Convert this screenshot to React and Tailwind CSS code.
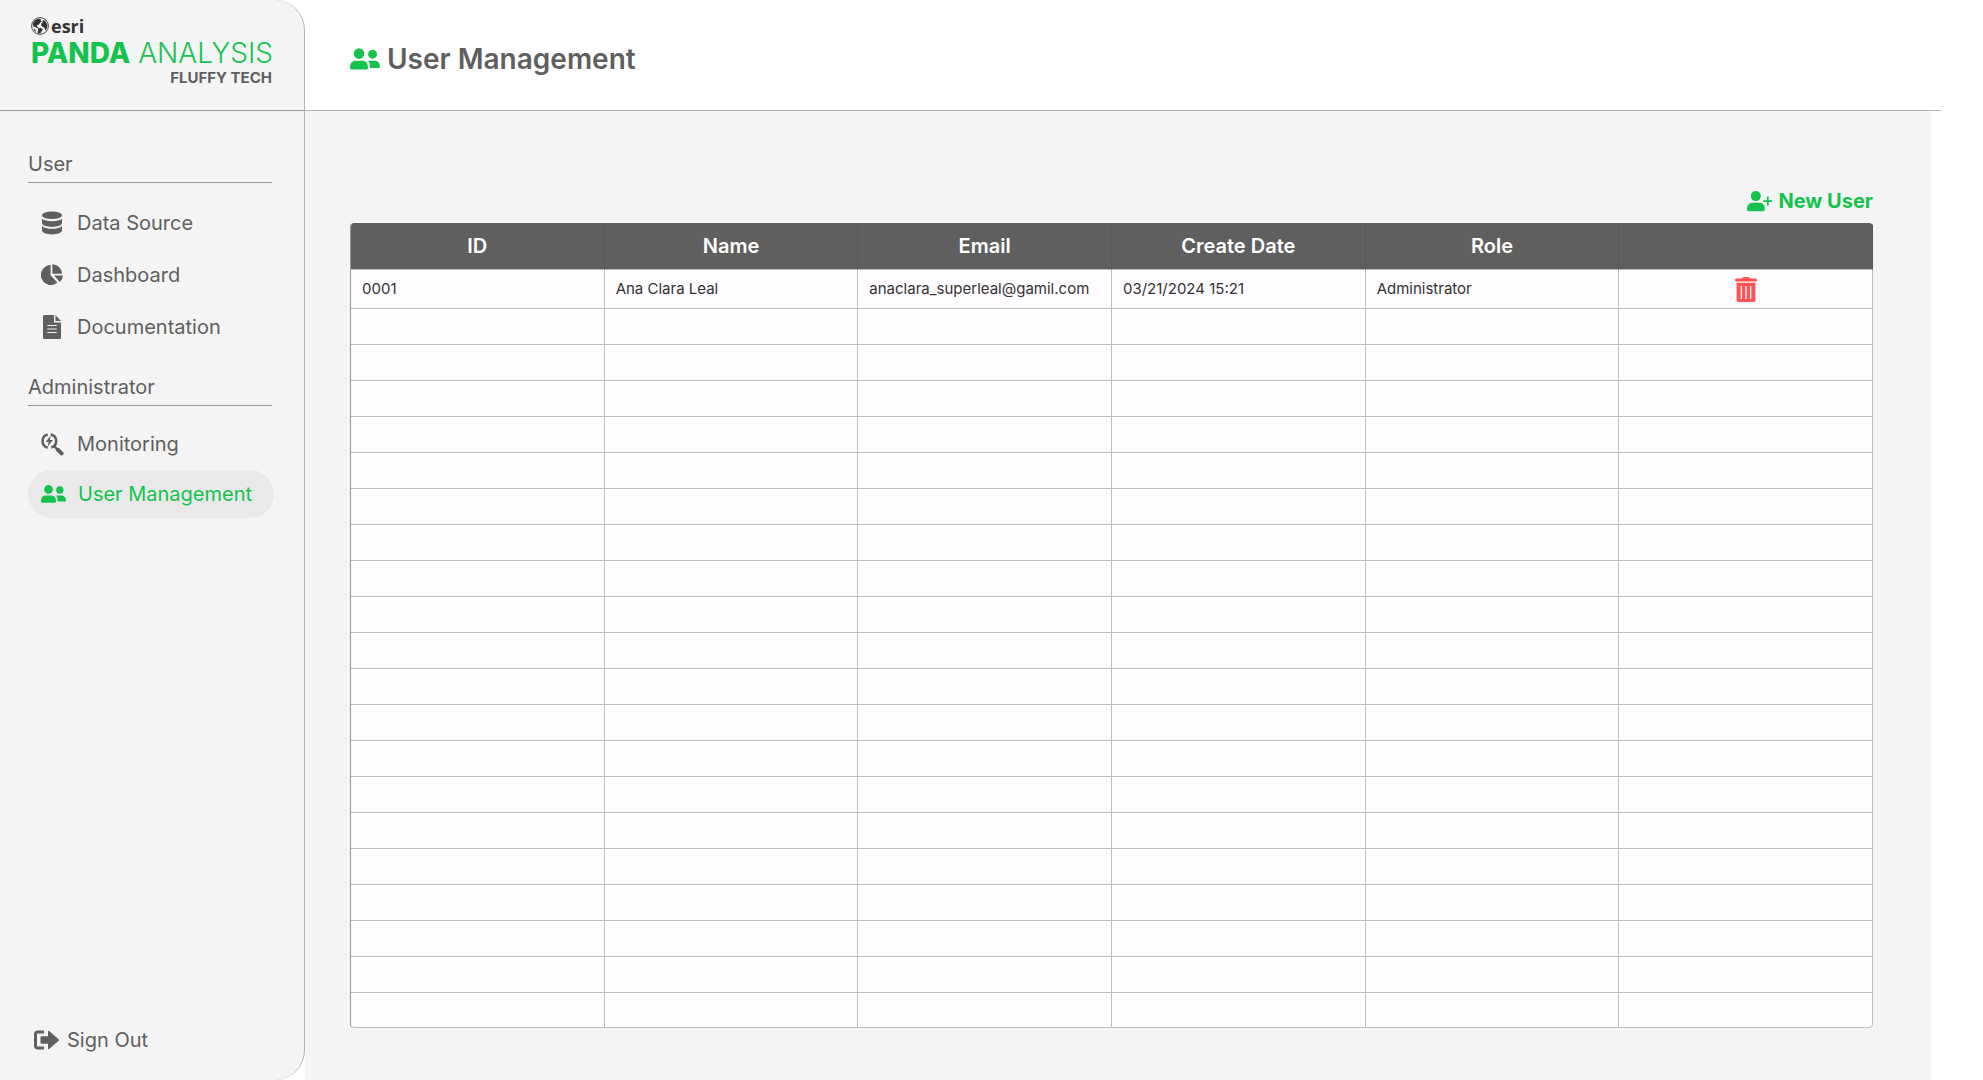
const COLUMNS = ["ID", "Name", "Email", "Create Date", "Role", ""];
const USERS = [
  ["0001", "Ana Clara Leal", "anaclara_superleal@gamil.com", "03/21/2024 15:21", "Administrator"],
];
const EMPTY_ROWS = Array.from({ length: 20 }, (_, i) => i);

function DatabaseIcon() {
  return (
    <svg viewBox="0 0 20 24" className="h-6 w-5 fill-current" aria-hidden="true">
      <ellipse cx="10" cy="4.2" rx="10" ry="3.8" />
      <path d="M0 7.6C1.5 9.4 5.500 10.300 10 10.300S18.500 9.400 20 7.600V12C20 14.200 15.500 15.900 10 15.900S0 14.200 0 12Z" />
      <path d="M0 15C1.500 16.900 5.500 17.800 10 17.800S18.500 16.900 20 15V19.500C20 21.700 15.500 23.400 10 23.400S0 21.700 0 19.500Z" />
    </svg>
  );
}

function PieIcon() {
  return (
    <svg viewBox="0 0 22 22" className="size-[22px] fill-current" aria-hidden="true">
      <path d="M9.600 1V11.200L16.400 18.600A10 10 0 1 1 9.600 1Z" />
      <path d="M11.400 .300A9.600 9.600 0 0 1 21 9.700H11.400Z" />
      <path d="M13 11.500H22A10 10 0 0 1 18.800 18Z" />
    </svg>
  );
}

function DocumentIcon() {
  return (
    <svg viewBox="0 0 18 24" className="h-6 w-[18px]" aria-hidden="true">
      <path fill="currentColor" d="M1.200 0H11V7.500H18V22.800A1.200 1.200 0 0 1 16.800 24H1.200A1.200 1.200 0 0 1 0 22.800V1.200A1.200 1.200 0 0 1 1.200 0ZM12.400 0L18 6.100H12.400Z" />
      <path stroke="#f4f4f4" strokeWidth="1.200" d="M4.300 10.500H13.700M4.300 14H13.700M4.300 17.500H13.700" />
    </svg>
  );
}

function MonitorIcon() {
  return (
    <svg viewBox="0 0 23 23" className="size-[23px]" aria-hidden="true">
      <g fill="none" stroke="currentColor">
        <path strokeWidth="2.500" d="M6.700 1.500A6.800 6.800 0 0 0 6.700 14.700M9.800 1.500A6.700 6.700 0 0 1 10.300 14.500" />
        <path strokeWidth="2.400" d="M13 13L17 17" />
        <path strokeWidth="4" strokeLinecap="round" d="M16.800 16.800L20.600 20.400" />
      </g>
      <path fill="currentColor" d="M9.800 2.400L4.600 8.900H7.700L6.500 13.800L12 7.100H8.800Z" />
    </svg>
  );
}

function UsersIcon({ className }) {
  return (
    <svg viewBox="0 0 25 18" className={className} aria-hidden="true">
      <g fill="currentColor">
        <circle cx="7.500" cy="4.500" r="4.400" />
        <circle cx="18.800" cy="5" r="3.700" />
        <path d="M0 16.400C0 12.400 2 10.400 4.600 10.400H10.400C13 10.400 15 12.400 15 16.400Q15 17.800 13.600 17.800H1.400Q0 17.800 0 16.400Z" />
        <path d="M15 10.400H20.500C23.300 10.400 25 12.400 25 15.400Q25 16.500 23.800 16.500H16.600C16.700 13.600 16.200 11.800 15 10.400Z" />
      </g>
    </svg>
  );
}

function UserPlusIcon() {
  return (
    <svg viewBox="0 0 25 21" className="h-[21px] w-[25px] fill-current" aria-hidden="true">
      <circle cx="8.800" cy="5.100" r="5" />
      <path d="M0 18.500C0 14 2.200 11.800 5.200 11.800H12.600C15.700 11.800 17.800 14 17.800 18.500Q17.800 20.200 16.200 20.200H1.600Q0 20.200 0 18.500Z" />
      <path d="M19.900 5.600H21.700V9.200H25V11H21.700V14.500H19.900V11H16.400V9.200H19.900Z" />
    </svg>
  );
}

function TrashIcon() {
  return (
    <svg viewBox="0 0 22 25" className="h-[25px] w-[22px] fill-current" aria-hidden="true">
      <path d="M7.500 .800Q7.800 0 8.600 0H13.400Q14.200 0 14.500 .800L14.800 1.400H20.800Q22 1.400 22 3T20.800 4.600H1.200Q0 4.600 0 3T1.200 1.400H7.200Z" />
      <path fillRule="evenodd" d="M1.600 5.800H20.400V23Q20.400 25 18.400 25H3.600Q1.600 25 1.600 23ZM5.700 9V22H7V9ZM10.300 9V22H11.700V9ZM15 9V22H16.300V9Z" />
    </svg>
  );
}

function SignOutIcon() {
  return (
    <svg viewBox="0 0 25 20" className="h-5 w-[25px]" aria-hidden="true">
      <path fill="none" stroke="currentColor" strokeWidth="3" d="M10 2H4Q1.500 2 1.500 4.500V15.500Q1.500 18 4 18H10" />
      <path fill="currentColor" d="M6.500 7.200Q6.500 6.200 7.500 6.200H14V1.600Q14 0 15.400 1.200L24.600 9.200Q25.200 10 24.600 10.800L15.400 18.800Q14 20 14 18.400V13.800H7.500Q6.500 13.800 6.500 12.800Z" />
    </svg>
  );
}

function EsriGlobe() {
  return (
    <svg viewBox="0 0 18 18" className="size-[18px]" aria-hidden="true">
      <circle cx="9" cy="9" r="8.400" fill="#f4f4f4" stroke="#333" strokeWidth=".9" />
      <path fill="#333" d="M1.800 7C2.500 4 5 2 8 1.800L10 2.600L9.600 3.800L11 4.200L9.200 5.600L8 7.600L6.200 8.200L5.600 9.400L7.400 10.200L6.600 11.400L4.200 10L2.400 9.600Z" />
      <path fill="#333" d="M7 11.600L9.400 10.800L11.800 12.200L10.800 14.200L9.200 16.600C7.800 16.600 6.800 16 6.400 15.200L7.200 13.600Z" />
      <path fill="#333" d="M10.400 6.400L11.800 5.200L11.600 3.400L13.200 3.200L15.200 5.200L16.400 8.200L15.800 11.400L14.400 13.400L13.400 10.800L11.400 9.800L10.200 8.400Z" />
      <path fill="#333" d="M2.600 11.400L4.400 12.400L5 14.800L3.400 13.400Z" />
    </svg>
  );
}

function NavItem({ icon, label, active }) {
  return (
    <li>
      <a
        href="#"
        aria-current={active ? "page" : undefined}
        className={
          active
            ? "flex h-12 items-center rounded-full bg-[#e9e9e9] pl-3 text-[#14c34e]"
            : "flex h-12 items-center rounded-full pl-[11px]"
        }
      >
        <span className="mr-3 flex w-[26px] justify-center">{icon}</span>
        {label}
      </a>
    </li>
  );
}

function Sidebar() {
  return (
    <aside className="flex w-[305px] shrink-0 flex-col rounded-r-[30px] border-r border-[#b4b4b4] bg-[#f4f4f4] text-xl leading-6">
      <div className="flex h-[111px] flex-col border-b border-[#999] pt-3.5 pr-8 pl-[31px]">
        <div className="flex h-6 items-center gap-0.5 font-['Open_Sans'] text-lg leading-5 font-bold text-[#333]">
          <EsriGlobe />
          <span>esri</span>
        </div>
        <p className="text-[28px] leading-[30px] font-light whitespace-nowrap text-[#14c34e]">
          <b className="font-extrabold">PANDA</b> ANALYSIS
        </p>
        <p className="text-right text-[15px] leading-5 font-bold">FLUFFY TECH</p>
      </div>

      <nav className="flex grow flex-col pr-[30px] pl-7">
        <h2 className="mt-[41px] mr-0.5 border-b border-[#999] pb-1.5">User</h2>
        <ul className="mt-4 flex flex-col gap-1">
          <NavItem icon={<DatabaseIcon />} label="Data Source" />
          <NavItem icon={<PieIcon />} label="Dashboard" />
          <NavItem icon={<DocumentIcon />} label="Documentation" />
        </ul>
        <h2 className="mt-6 mr-0.5 border-b border-[#999] pb-1.5">Administrator</h2>
        <ul className="mt-3.5 flex flex-col gap-0.5">
          <NavItem icon={<MonitorIcon />} label="Monitoring" />
          <NavItem icon={<UsersIcon className="h-[18px] w-[25px]" />} label="User Management" active />
        </ul>
        <button type="button" className="mt-auto mb-7 flex items-center gap-2 pl-1.5">
          <SignOutIcon />
          Sign Out
        </button>
      </nav>
    </aside>
  );
}

function UserTable() {
  return (
    <table className="w-full table-fixed border-separate border-spacing-0 overflow-hidden rounded border-l border-[#999] bg-[#fefcfe] text-left">
      <thead>
        <tr className="h-[47px] bg-[#5f5f5f] text-xl leading-6 text-white">
          {COLUMNS.map((name, i) => (
            <th key={i} scope="col" className="border-r border-b border-r-[#595959] border-b-[#bdbdbd] text-center font-semibold">
              {name}
            </th>
          ))}
        </tr>
      </thead>
      <tbody className="text-[15px] leading-5 text-[#333]">
        {USERS.map((user) => (
          <tr key={user[0]} className="h-[39px]">
            {user.map((value, i) => (
              <td key={i} className="border-r border-b border-[#bdbdbd] pl-[11px]">
                {value}
              </td>
            ))}
            <td className="border-r border-b border-[#bdbdbd]">
              <button type="button" aria-label="Delete user" className="mx-auto block text-[#ff5252]">
                <TrashIcon />
              </button>
            </td>
          </tr>
        ))}
        {EMPTY_ROWS.map((row) => (
          <tr key={row} className="group h-9 last:h-[35px]">
            {COLUMNS.map((_, i) => (
              <td key={i} className="border-r border-b border-[#bdbdbd] group-last:first:rounded-bl group-last:last:rounded-br" />
            ))}
          </tr>
        ))}
      </tbody>
    </table>
  );
}

export default function App() {
  return (
    <div className="flex min-h-screen bg-white font-['Inter',sans-serif] text-[#5f5f5f]">
      <Sidebar />
      <div className="flex min-w-0 grow flex-col">
        <header className="mr-[42px] flex h-[111px] items-center gap-[7px] border-b border-[#b4b4b4] pt-2 pl-[45px]">
          <UsersIcon className="h-[22px] w-[30px] text-[#14c34e]" />
          <h1 className="text-[28px] leading-8 font-semibold">User Management</h1>
        </header>
        <main className="mr-[52px] flex grow flex-col bg-[#f4f4f4] pt-[77px] pr-[58px] pb-[52px] pl-[45px]">
          <button type="button" className="mb-[9px] flex h-[26px] items-center gap-1.5 self-end text-xl leading-6 font-bold text-[#14c34e]">
            <UserPlusIcon />
            New User
          </button>
          <UserTable />
        </main>
      </div>
    </div>
  );
}
